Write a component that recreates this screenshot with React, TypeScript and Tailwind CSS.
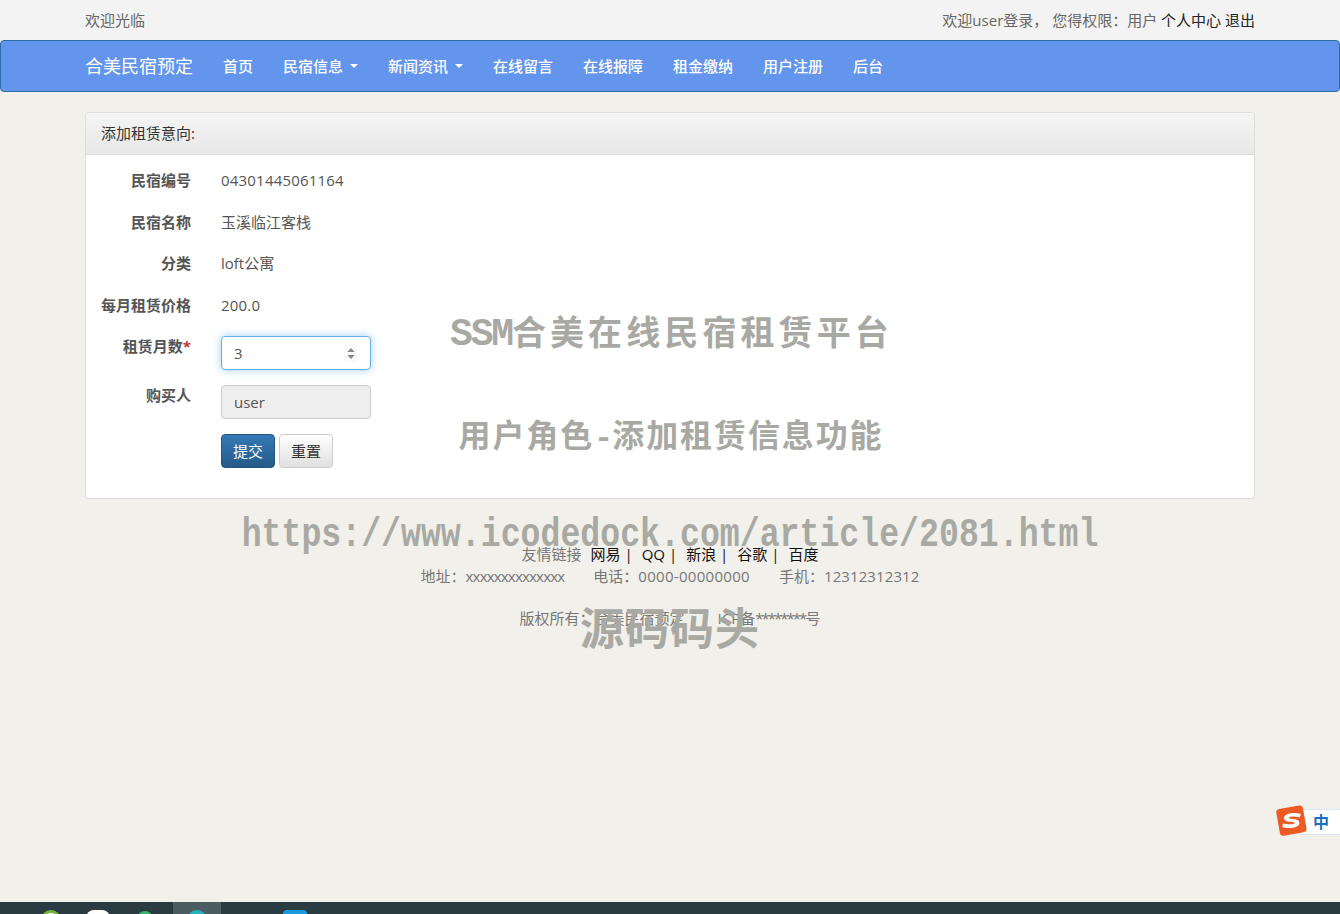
import React from 'react';

const navItems = [
  { label: '首页' },
  { label: '民宿信息', caret: true },
  { label: '新闻资讯', caret: true },
  { label: '在线留言' },
  { label: '在线报障' },
  { label: '租金缴纳' },
  { label: '用户注册' },
  { label: '后台' },
];

const fields = [
  { label: '民宿编号', value: '04301445061164', num: true },
  { label: '民宿名称', value: '玉溪临江客栈' },
  { label: '分类', value: 'loft公寓' },
  { label: '每月租赁价格', value: '200.0', num: true },
];

const footerLinks = ['网易', 'QQ', '新浪', '谷歌'];

const Caret = () => (
  <span className="ml-[7px] inline-block h-0 w-0 border-x-4 border-t-4 border-x-transparent border-t-white align-middle" />
);

const Navbar = () => (
  <nav className="h-[52px] rounded border border-[#2e6da4] bg-[#6495ed]">
    <div className="mx-auto flex h-full w-[1170px] items-center text-white">
      <a className="mr-[15px] text-[18px]">合美民宿预定</a>
      {navItems.map((item) => (
        <a key={item.label} className="flex items-center px-[15px] font-medium">
          {item.label}
          {item.caret && <Caret />}
        </a>
      ))}
    </div>
  </nav>
);

const FormRow: React.FC<{ label: React.ReactNode; children: React.ReactNode; className?: string }> = ({
  label,
  children,
  className,
}) => (
  <div className={`flex ${className ?? ''}`}>
    <label className="w-[90px] text-right font-bold text-[#555]">{label}</label>
    <div className="ml-[30px]">{children}</div>
  </div>
);

const SogouWidget = () => (
  <div className="absolute right-0 top-[805px] h-[32px] w-[64px]">
    <div className="absolute right-0 top-[4px] h-[26px] w-[40px] border-y border-l border-[#d8e6f4] bg-white pl-[12px] text-[16px] font-bold leading-[24px] text-[#1a70c0]">
      中
    </div>
    <svg viewBox="0 0 32 32" className="absolute left-0 top-0 h-[32px] w-[32px]">
      <rect x="2" y="2" width="27" height="27" rx="3.500" transform="rotate(-10 16 16)" fill="#ee5a24" />
      <path
        d="M25 9c-3-.9-7-1.200-10-.7-3.500.5-7 2-7 4.900 0 2.600 3 3.300 6 3.600 3 .3 5 .5 4.800 1.300-.2.900-2.200 1.200-4.800 1.200-2.300 0-5-.4-7-1l-.7 3.800c2.500.8 5.800 1.100 8.800.9 4.500-.3 8.300-1.900 8.300-5.200 0-2.800-3-3.600-6.500-3.900-2.600-.3-4-.5-3.900-1.200.1-.8 2-1.100 4-1.100 2.200 0 4.500.3 6.500.9z"
        fill="#fff"
      />
    </svg>
  </div>
);

const Taskbar = () => (
  <div className="mt-auto flex h-[12px] overflow-hidden bg-[#2b3b42]">
    <div className="ml-[41px] mt-[8px] h-5 w-5 shrink-0 rounded-full border-[3px] border-[#7cb342] bg-white" />
    <div className="ml-[25px] mt-[8px] h-6 w-6 shrink-0 rounded-lg bg-white" />
    <div className="ml-[27px] mt-[9px] h-4 w-4 shrink-0 rounded-full bg-[#3cb371]" />
    <div className="ml-[20px] flex h-full w-[48px] shrink-0 justify-center bg-[#4d5c60] pt-[8px]">
      <div className="h-5 w-5 rounded-full bg-[#26b3b8]" />
    </div>
    <div className="ml-[62px] mt-[8px] h-6 w-6 shrink-0 rounded bg-[#1a9be0]" />
  </div>
);

const Watermarks = () => (
  <div className="pointer-events-none absolute inset-x-0 top-0 text-center font-bold text-[#a9a9a4]">
    <div className="absolute inset-x-0 top-[307px] pl-[3px] text-[34px] leading-[50px] tracking-[4.1px]">
      <span className="font-['Liberation_Mono',monospace] text-[38px] tracking-[-2.2px]">SSM</span>合美在线民宿租赁平台
    </div>
    <div className="absolute inset-x-0 top-[410px] pl-[2px] text-[32px] leading-[50px] tracking-[1.9px]">
      用户角色<span className="font-['Liberation_Mono',monospace] tracking-[-1px]">-</span>添加租赁信息功能
    </div>
    <div className="absolute inset-x-0 top-[511px] scale-x-[0.83] font-['Liberation_Mono',monospace] text-[40px] leading-[50px]">
      https://www.icodedock.com/article/2081.html
    </div>
    <div className="absolute inset-x-0 top-[603px] text-[44px] leading-[50px] tracking-[1px]">源码码头</div>
  </div>
);

export default function App() {
  return (
    <div className="relative flex h-[914px] flex-col overflow-hidden bg-[#f1f0ea] font-['Open_Sans','Noto_Sans_CJK_SC',sans-serif] text-[15px] leading-5 text-[#666]">
      <div className="h-10 bg-[#f3f3f3]">
        <div className="mx-auto flex h-full w-[1170px] items-center justify-between">
          <span>欢迎光临</span>
          <span>
            欢迎user登录， 您得权限：用户 <a className="text-[#222]">个人中心</a> <a className="text-[#222]">退出</a>
          </span>
        </div>
      </div>
      <Navbar />

      <main className="mx-auto mt-5 w-[1170px]">
        <section className="rounded border border-[#ddd] bg-white">
          <div className="flex h-[42px] items-center rounded-t border-b border-[#ddd] bg-gradient-to-b from-[#f5f5f5] to-[#e8e8e8] px-[15px] pb-[2px] text-[#333]">
            添加租赁意向:
          </div>
          <div className="p-[15px]">
            {fields.map((f) => (
              <FormRow key={f.label} label={f.label} className="mb-[15px] h-[26.5px]">
                <span className={f.num ? 'tracking-[0.2px] text-[#555]' : 'text-[#555]'}>{f.value}</span>
              </FormRow>
            ))}
            <FormRow
              label={
                <>
                  租赁月数<span className="text-[#c9302c]">*</span>
                </>
              }
              className="mb-[15px]"
            >
              <div className="flex h-[34px] w-[150px] items-center rounded border border-[#66afe9] bg-white pl-3 pr-[12px] shadow-[0_0_8px_rgba(102,175,233,0.6)]">
                <input readOnly value="3" className="w-full bg-transparent text-[#555] outline-none" />
                <div className="flex h-[18px] w-[14px] shrink-0 items-center justify-center bg-[#fafafa]">
                  <svg viewBox="0 0 8 14" className="h-[13px] w-[8px]">
                    <path d="M4 1 L8 5.500 H0 Z M0 8.500 H8 L4 13 Z" fill="#888" />
                  </svg>
                </div>
              </div>
            </FormRow>
            <FormRow label="购买人" className="mb-[15px]">
              <input
                readOnly
                value="user"
                className="block h-[34px] w-[150px] rounded border border-[#ccc] bg-[#eee] px-3 text-[#555] outline-none"
              />
            </FormRow>
            <FormRow label="" className="mb-[15px]">
              <div className="flex gap-1">
                <button className="h-[34px] w-[54px] rounded border border-[#245580] bg-gradient-to-b from-[#337ab7] to-[#265a88] text-white">
                  提交
                </button>
                <button className="h-[34px] w-[54px] rounded border border-[#ccc] bg-gradient-to-b from-white to-[#e0e0e0] text-[#333]">
                  重置
                </button>
              </div>
            </FormRow>
          </div>
        </section>

        <footer className="mt-[44px] text-center leading-[22px] text-[#777]">
          <p>
            友情链接
            {footerLinks.map((l) => (
              <a key={l} className="ml-[9px] text-[#111]">
                {l} |
              </a>
            ))}
            <a className="ml-[9px] text-[#111]">百度</a>
          </p>
          <p>
            地址：<span className="tracking-[-0.8px]">xxxxxxxxxxxxxx</span>
            <span className="ml-[29px]">
              电话：<span className="tracking-[0.3px]">0000-00000000</span>
            </span>
            <span className="ml-[29px]">
              手机：<span className="tracking-[0.1px]">12312312312</span>
            </span>
          </p>
          <p className="mt-[20px]">
            版权所有：合美民宿预定
            <span className="ml-[33px]">
              ICP备<span className="tracking-[-2px]">********</span>号
            </span>
          </p>
        </footer>
      </main>

      <Watermarks />
      <SogouWidget />
      <Taskbar />
    </div>
  );
}
